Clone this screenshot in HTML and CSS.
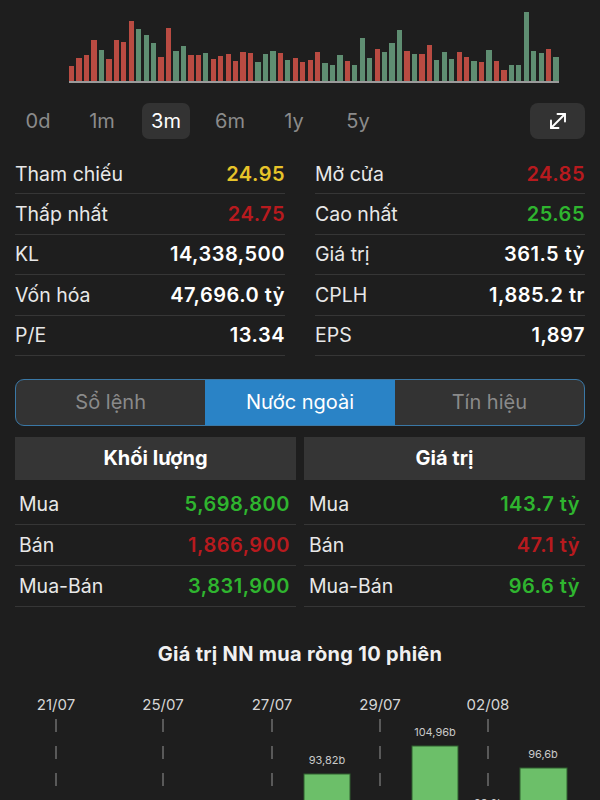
FILE: index.html
```html
<!DOCTYPE html>
<html lang="vi">
<head>
    <meta charset="UTF-8">
    <meta name="viewport" content="width=device-width, initial-scale=1.0">
    <title>Chi tiết mã</title>
    <link rel="stylesheet" href="styles.css">
</head>
<body>
    <section class="volume-chart">
        <div class="bars">
            <span class="bar r" style="height:15px"></span>
            <span class="bar r" style="height:23px"></span>
            <span class="bar r" style="height:26px"></span>
            <span class="bar r" style="height:41px"></span>
            <span class="bar g" style="height:31px"></span>
            <span class="bar r" style="height:22px"></span>
            <span class="bar r" style="height:41px"></span>
            <span class="bar r" style="height:39px"></span>
            <span class="bar r" style="height:60px"></span>
            <span class="bar g" style="height:52px"></span>
            <span class="bar g" style="height:46px"></span>
            <span class="bar g" style="height:38px"></span>
            <span class="bar r" style="height:24px"></span>
            <span class="bar r" style="height:53px"></span>
            <span class="bar g" style="height:30px"></span>
            <span class="bar g" style="height:35px"></span>
            <span class="bar r" style="height:26px"></span>
            <span class="bar r" style="height:26px"></span>
            <span class="bar g" style="height:28px"></span>
            <span class="bar r" style="height:22px"></span>
            <span class="bar r" style="height:25px"></span>
            <span class="bar r" style="height:27px"></span>
            <span class="bar r" style="height:20px"></span>
            <span class="bar r" style="height:29px"></span>
            <span class="bar r" style="height:28px"></span>
            <span class="bar g" style="height:19px"></span>
            <span class="bar g" style="height:27px"></span>
            <span class="bar g" style="height:30px"></span>
            <span class="bar r" style="height:28px"></span>
            <span class="bar g" style="height:21px"></span>
            <span class="bar r" style="height:23px"></span>
            <span class="bar r" style="height:19px"></span>
            <span class="bar r" style="height:21px"></span>
            <span class="bar r" style="height:29px"></span>
            <span class="bar g" style="height:18px"></span>
            <span class="bar g" style="height:16px"></span>
            <span class="bar g" style="height:26px"></span>
            <span class="bar r" style="height:20px"></span>
            <span class="bar g" style="height:16px"></span>
            <span class="bar g" style="height:43px"></span>
            <span class="bar g" style="height:23px"></span>
            <span class="bar r" style="height:32px"></span>
            <span class="bar g" style="height:29px"></span>
            <span class="bar g" style="height:38px"></span>
            <span class="bar g" style="height:51px"></span>
            <span class="bar r" style="height:30px"></span>
            <span class="bar g" style="height:27px"></span>
            <span class="bar r" style="height:27px"></span>
            <span class="bar r" style="height:36px"></span>
            <span class="bar g" style="height:21px"></span>
            <span class="bar g" style="height:29px"></span>
            <span class="bar g" style="height:22px"></span>
            <span class="bar r" style="height:29px"></span>
            <span class="bar r" style="height:24px"></span>
            <span class="bar g" style="height:20px"></span>
            <span class="bar r" style="height:19px"></span>
            <span class="bar g" style="height:31px"></span>
            <span class="bar r" style="height:20px"></span>
            <span class="bar r" style="height:11px"></span>
            <span class="bar g" style="height:16px"></span>
            <span class="bar g" style="height:16px"></span>
            <span class="bar g" style="height:69px"></span>
            <span class="bar g" style="height:30px"></span>
            <span class="bar g" style="height:28px"></span>
            <span class="bar r" style="height:32px"></span>
            <span class="bar g" style="height:24px"></span>
        </div>
    </section>

    <div class="periods">
        <div class="period-list">
            <span class="period">0d</span>
            <span class="period">1m</span>
            <span class="period active">3m</span>
            <span class="period">6m</span>
            <span class="period">1y</span>
            <span class="period">5y</span>
        </div>
        <button class="expand-btn" aria-label="Phóng to">
            <svg width="22" height="22" viewBox="0 0 22 22" fill="none" stroke="#fff" stroke-width="1.9" stroke-linecap="round" stroke-linejoin="round">
                <path d="M4 18 L18 4"/>
                <path d="M10.5 4 H18 V11.5"/>
                <path d="M4 10.5 V18 H11.5"/>
            </svg>
        </button>
    </div>

    <section class="stats">
        <div class="stat-col">
            <div class="stat-row"><span class="label">Tham chiếu</span><span class="value yellow">24.95</span></div>
            <div class="stat-row"><span class="label">Thấp nhất</span><span class="value red">24.75</span></div>
            <div class="stat-row"><span class="label">KL</span><span class="value">14,338,500</span></div>
            <div class="stat-row"><span class="label">Vốn hóa</span><span class="value">47,696.0 tỷ</span></div>
            <div class="stat-row"><span class="label">P/E</span><span class="value">13.34</span></div>
        </div>
        <div class="stat-col">
            <div class="stat-row"><span class="label">Mở cửa</span><span class="value red">24.85</span></div>
            <div class="stat-row"><span class="label">Cao nhất</span><span class="value green">25.65</span></div>
            <div class="stat-row"><span class="label">Giá trị</span><span class="value">361.5 tỷ</span></div>
            <div class="stat-row"><span class="label">CPLH</span><span class="value">1,885.2 tr</span></div>
            <div class="stat-row"><span class="label">EPS</span><span class="value">1,897</span></div>
        </div>
    </section>

    <nav class="segments">
        <a class="segment">Sổ lệnh</a>
        <a class="segment active">Nước ngoài</a>
        <a class="segment">Tín hiệu</a>
    </nav>

    <section class="foreign">
        <div class="foreign-col">
            <div class="foreign-head">Khối lượng</div>
            <div class="foreign-rows">
                <div class="foreign-row"><span class="label">Mua</span><span class="value green">5,698,800</span></div>
                <div class="foreign-row"><span class="label">Bán</span><span class="value red">1,866,900</span></div>
                <div class="foreign-row"><span class="label">Mua-Bán</span><span class="value green">3,831,900</span></div>
            </div>
        </div>
        <div class="foreign-col">
            <div class="foreign-head">Giá trị</div>
            <div class="foreign-rows">
                <div class="foreign-row"><span class="label">Mua</span><span class="value green">143.7 tỷ</span></div>
                <div class="foreign-row"><span class="label">Bán</span><span class="value red">47.1 tỷ</span></div>
                <div class="foreign-row"><span class="label">Mua-Bán</span><span class="value green">96.6 tỷ</span></div>
            </div>
        </div>
    </section>

    <h2 class="net-title">Giá trị NN mua ròng 10 phiên</h2>

    <section class="net-chart">
        <svg width="600" height="116" viewBox="0 0 600 116">
            <g class="dates">
                <text x="56" y="24">21/07</text>
                <text x="163" y="24">25/07</text>
                <text x="272" y="24">27/07</text>
                <text x="380" y="24">29/07</text>
                <text x="488" y="24">02/08</text>
            </g>
            <g class="grid">
                <line x1="56" y1="33" x2="56" y2="116"/>
                <line x1="163" y1="33" x2="163" y2="116"/>
                <line x1="272" y1="33" x2="272" y2="116"/>
                <line x1="380" y1="33" x2="380" y2="116"/>
                <line x1="488" y1="33" x2="488" y2="116"/>
            </g>
            <g class="net-bars">
                <rect x="304" y="88" width="46" height="40"/>
                <rect x="412" y="60" width="46" height="70"/>
                <rect x="520" y="82" width="47" height="50"/>
            </g>
            <g class="bar-labels">
                <text x="327" y="78">93,82b</text>
                <text x="435" y="50">104,96b</text>
                <text x="543" y="72">96,6b</text>
                <text x="489" y="121">93,2b</text>
            </g>
        </svg>
    </section>
</body>
</html>
```

FILE: styles.css
```css
body {
    margin: 0;
    padding: 0;
    width: 600px;
    height: 800px;
    overflow: hidden;
    background-color: #1e1e1e;
    color: #e6e6e6;
    font-family: Inter, "Noto Sans", sans-serif;
}

/* volume bars on top */
.volume-chart {
    padding: 0 0 0 69px;
    height: 88px;
}

.bars {
    width: 490px;
    height: 81px;
    display: flex;
    align-items: flex-end;
    gap: 2.2px;
    border-bottom: 2px solid #9a9a9a;
}

.bar {
    flex: 1;
}

.bar.r {
    background-color: #b94b42;
}

.bar.g {
    background-color: #5f8e72;
}

/* period tabs */
.periods {
    display: flex;
    justify-content: space-between;
    align-items: center;
    padding: 0 15px 0 14px;
    margin-top: 15px;
}

.period-list {
    display: flex;
    gap: 16px;
}

.period {
    width: 48px;
    height: 36px;
    line-height: 37px;
    text-align: center;
    font-size: 20px;
    color: #8b8b8b;
    border-radius: 7px;
}

.period.active {
    background-color: #333333;
    color: #fff;
}

.expand-btn {
    width: 55px;
    height: 36px;
    border: none;
    border-radius: 8px;
    background-color: #333333;
    display: flex;
    align-items: center;
    justify-content: center;
    padding: 0;
}

/* price stats */
.stats {
    display: grid;
    grid-template-columns: 1fr 1fr;
    column-gap: 30px;
    padding: 0 15px;
    margin-top: 15px;
}

.stat-row {
    height: 39.4px;
    display: flex;
    justify-content: space-between;
    align-items: center;
    border-bottom: 1px solid #363636;
    font-size: 19.5px;
}

.label {
    color: #e8e8e8;
}

.value {
    font-size: 20px;
    font-weight: 600;
    letter-spacing: 0.5px;
    color: #fff;
}

.yellow {
    color: #e7c42a;
}

.red {
    color: #b81a1e;
}

.green {
    color: #2fb52f;
}

/* segmented control */
.segments {
    display: flex;
    margin: 23px 15px 0;
    height: 45px;
    border: 1.5px solid #3a78a6;
    border-radius: 9px;
    overflow: hidden;
    background-color: #333333;
}

.segment {
    flex: 1;
    display: flex;
    align-items: center;
    justify-content: center;
    font-size: 20px;
    color: #8a8a8a;
}

.segment.active {
    background-color: #2a83c6;
    color: #fff;
}

/* foreign trading */
.foreign {
    display: grid;
    grid-template-columns: 1fr 1fr;
    column-gap: 8px;
    padding: 0 15px;
    margin-top: 11px;
}

.foreign-head {
    height: 43px;
    line-height: 43px;
    text-align: center;
    background-color: #353535;
    font-size: 20px;
    font-weight: 700;
    color: #fff;
}

.foreign-rows {
    padding-top: 4px;
}

.foreign-row {
    height: 40px;
    display: flex;
    justify-content: space-between;
    align-items: center;
    padding: 0 6px 0 4px;
    border-bottom: 1px solid #363636;
    font-size: 19.5px;
}

.foreign-col + .foreign-col .foreign-row {
    padding: 0 5px 0 5px;
}

.net-title {
    margin: 35px 0 0;
    text-align: center;
    font-size: 20px;
    font-weight: 700;
    letter-spacing: 0.3px;
    color: #f0f0f0;
}

/* net buy chart */
.net-chart svg {
    display: block;
    margin-top: 20px;
}

.dates text {
    fill: #d6d6d6;
    font-size: 15px;
    text-anchor: middle;
}

.grid line {
    stroke: #6e6e6e;
    stroke-width: 1.5;
    stroke-dasharray: 13 14;
}

.net-bars rect {
    fill: #6cbf69;
    stroke: #2f5f2f;
    stroke-width: 1;
}

.bar-labels text {
    fill: #c9c9c9;
    font-size: 11px;
    text-anchor: middle;
}
```
